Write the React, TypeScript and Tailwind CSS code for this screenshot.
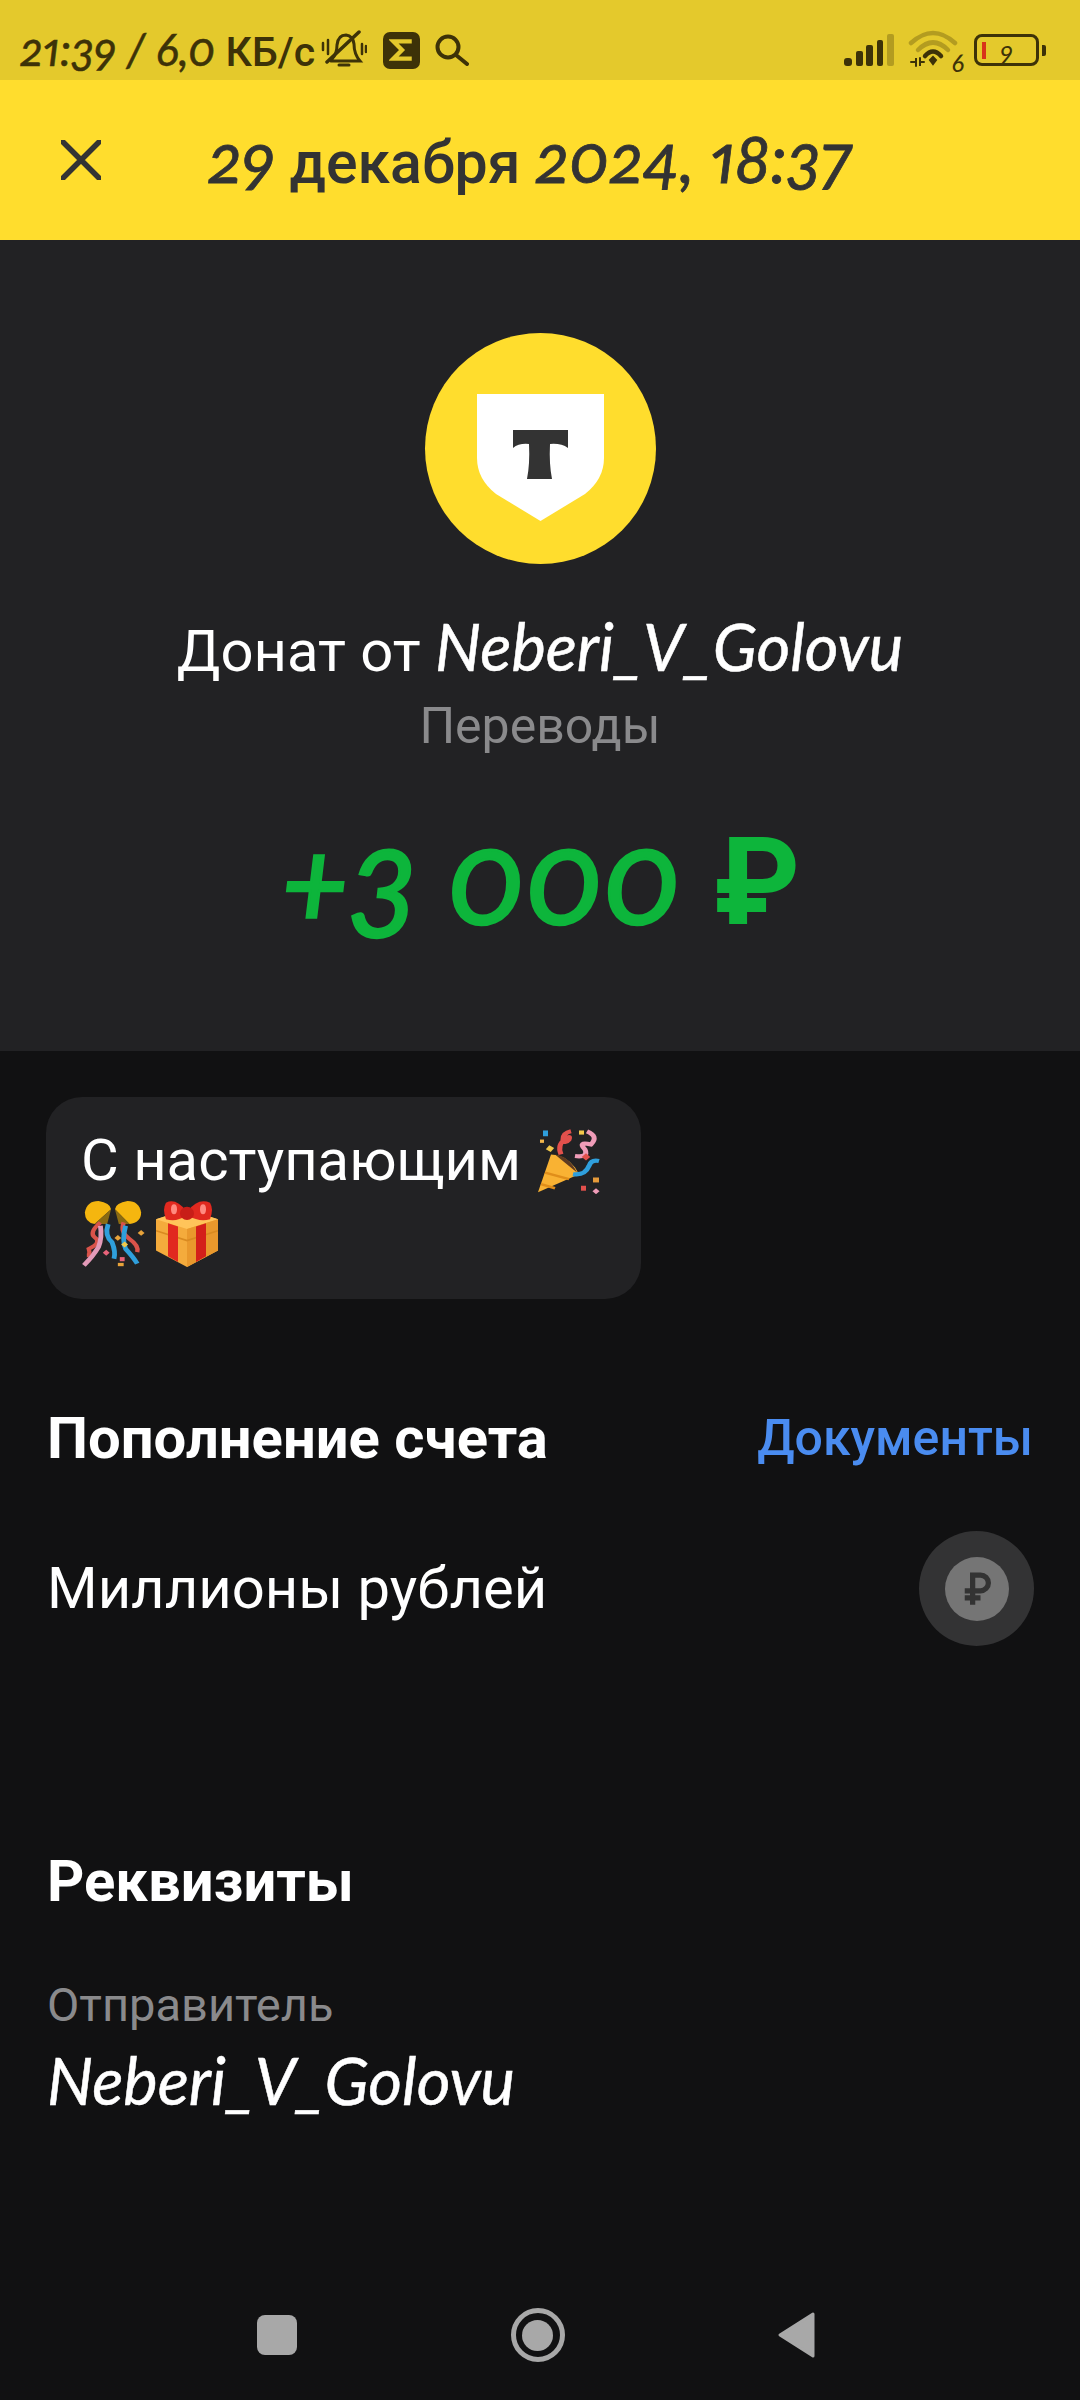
import React from "react";

const roboto = "font-['Roboto','Noto_Sans',sans-serif]";
const latin = "font-['Lato','Open_Sans',sans-serif] italic [font-feature-settings:'onum'_1,'pnum'_1]";

function L({ children, className = "" }: { children: React.ReactNode; className?: string }) {
  return <span className={`${latin} ${className}`}>{children}</span>;
}

function Popper() {
  return (
    <svg viewBox="0 0 66 80" preserveAspectRatio="none" className="inline-block w-[66px] h-[66px] align-[-14px]">
      <path d="M3 78 L16 32 Q30 32 40 48 L44 56 Z" fill="#f9b233" />
      <path d="M10 54 L34 62 M6 68 L20 73" stroke="#e08e1a" strokeWidth="3" />
      <path d="M20 32 Q34 34 42 54 L30 42Z" fill="#5d3a22" />
      <path d="M26 32 Q22 20 30 14 Q36 8 34 14 Q30 20 28 14 Q28 6 36 4" fill="none" stroke="#e2504c" strokeWidth="5" />
      <path d="M40 34 Q54 36 50 26 Q42 16 56 20 Q64 10 52 4" fill="none" stroke="#ef9cb8" strokeWidth="5" />
      <path d="M38 56 Q50 58 54 46 Q56 38 64 40" fill="none" stroke="#2f9fdc" strokeWidth="5" />
      <rect x="8" y="3" width="5" height="7" fill="#2f9fdc" />
      <rect x="5" y="14" width="4" height="4" fill="#f2b64b" />
      <rect x="12" y="22" width="6" height="6" fill="#f2c84b" transform="rotate(35 15 25)" />
      <rect x="48" y="32" width="6" height="6" fill="#e2504c" transform="rotate(45 51 35)" />
      <rect x="58" y="60" width="6" height="6" fill="#e59a3a" />
      <rect x="46" y="70" width="5" height="6" fill="#e2504c" />
      <rect x="59" y="74" width="5" height="5" fill="#ef9cb8" transform="rotate(45 61 76)" />
      <rect x="44" y="3" width="5" height="5" fill="#f2c84b" />
    </svg>
  );
}

function Confetti() {
  return (
    <svg viewBox="0 0 66 80" preserveAspectRatio="none" className="inline-block w-[64px] h-[66px] align-[-14px]">
      <path d="M4 14 Q6 0 18 0 Q30 2 31 10 L14 28 Q4 26 4 14Z" fill="#f5b60f" />
      <path d="M62 14 Q60 0 48 0 Q36 2 35 10 L50 28 Q62 26 62 14Z" fill="#f5b60f" />
      <path d="M14 28 L31 10 L27 28Z M50 28 L35 10 L39 28Z" fill="#8a6a12" />
      <path d="M20 26 Q8 38 14 44 Q22 50 8 58 Q10 66 6 66" fill="none" stroke="#d9534a" strokeWidth="4.5" />
      <path d="M20 30 Q22 44 18 56 Q12 68 3 78" fill="none" stroke="#e39ab8" strokeWidth="5" />
      <path d="M28 28 Q24 42 32 50 Q36 62 34 70" fill="none" stroke="#2f9fdc" strokeWidth="5" />
      <path d="M44 26 Q40 38 50 46 Q60 54 58 62" fill="none" stroke="#d9534a" strokeWidth="4.5" />
      <path d="M46 30 Q42 48 46 58 Q54 68 58 76" fill="none" stroke="#2f9fdc" strokeWidth="5" />
      <rect x="36" y="42" width="5" height="5" fill="#e8a33a" transform="rotate(45 38 44)" />
      <rect x="24" y="60" width="5" height="5" fill="#e8637a" transform="rotate(45 26 62)" />
      <rect x="40" y="68" width="5" height="5" fill="#e8637a" />
      <rect x="38" y="75" width="6" height="4" fill="#e8a33a" />
      <rect x="60" y="36" width="5" height="5" fill="#e8a33a" transform="rotate(45 62 38)" />
      <rect x="43" y="50" width="5" height="5" fill="#f2c84b" transform="rotate(45 45 52)" />
    </svg>
  );
}

function Gift() {
  return (
    <svg viewBox="0 0 62 80" preserveAspectRatio="none" className="inline-block w-[62px] h-[66px] ml-[11px] align-[-14px]">
      <path d="M0 22 L31 10 L62 22 L62 60 L31 80 L0 60Z" fill="#f4ab3c" />
      <path d="M0 22 L31 34 L62 22 L31 10Z" fill="#ffc45a" />
      <path d="M31 34 L62 22 L62 60 L31 80Z" fill="#e9982c" />
      <path d="M0 36 L31 48 L62 36" fill="none" stroke="#d98a20" strokeWidth="2" />
      <path d="M12 27 L22 31 L22 74 L12 67Z" fill="#e1291f" />
      <path d="M40 31 L50 27 L50 67 L40 74Z" fill="#d41f1a" />
      <path d="M30 12 Q20 -4 10 2 Q6 10 10 22 Q20 26 30 18Z" fill="#e1291f" />
      <path d="M32 12 Q42 -4 54 2 Q58 10 54 22 Q44 26 32 18Z" fill="#e1291f" />
      <ellipse cx="31" cy="15" rx="7" ry="8" fill="#c81e18" />
      <ellipse cx="18" cy="10" rx="3" ry="6" fill="#ff8a80" />
      <ellipse cx="47" cy="10" rx="3" ry="6" fill="#ff8a80" />
    </svg>
  );
}

export default function App() {
  return (
    <div className={`w-[1080px] h-[2400px] flex flex-col bg-[#111112] overflow-hidden ${roboto}`}>
      {/* status bar */}
      <div className="h-[80px] shrink-0 bg-[#e4c92c] flex items-end justify-between pb-[8px] pl-[20px] pr-[34px] text-[#3d3208]">
        <div className="flex items-center h-[44px]">
          <span className="text-[41px] font-medium leading-[44px] whitespace-nowrap">
            <L className="text-[46px] font-normal [-webkit-text-stroke:0.5px_#3d3208]">21:39</L>{" "}
            <L className="text-[46px] font-normal [-webkit-text-stroke:0.5px_#3d3208]">/</L>{" "}
            <L className="text-[46px] font-normal [-webkit-text-stroke:0.5px_#3d3208]">6,0</L> КБ/с
          </span>
          <svg viewBox="0 0 46 40" className="w-[46px] h-[40px] ml-[6px]" fill="none" stroke="#3d3208" strokeWidth="3" strokeLinecap="round">
            <path d="M11 29 Q16 24 16 15 Q17 5 25 5 Q32 6 33 14 Q33 24 39 31 L10 31" />
            <path d="M18 35 H28" />
            <path d="M6 32 L38 2" strokeWidth="3.5" />
            <path d="M2 13 V20 M7 10 V24 M41 14 V24 M45 16 V22" strokeWidth="2.5" />
          </svg>
          <div className="ml-[16px] w-[37px] h-[37px] rounded-[7px] bg-[#3d3208] flex items-center justify-center">
            <svg viewBox="0 0 24 24" className="w-[26px] h-[26px]" fill="none" stroke="#e4c92c" strokeWidth="4">
              <path d="M21 4 H4 L12 12 L4 20 H21" />
            </svg>
          </div>
          <svg viewBox="0 0 34 32" className="ml-[15px] w-[34px] h-[32px]" fill="none" stroke="#3d3208" strokeWidth="4" strokeLinecap="round">
            <circle cx="13" cy="13" r="10.5" />
            <path d="M21 21 L32 30" />
          </svg>
        </div>
        <div className="flex items-center h-[44px]">
          <svg viewBox="0 0 50 32" className="w-[50px] h-[32px]">
            <rect x="0" y="24" width="8" height="8" rx="3" fill="#3d3208" />
            <rect x="12" y="17" width="7" height="15" rx="2" fill="#3d3208" />
            <rect x="22" y="11" width="7" height="21" rx="2" fill="#3d3208" />
            <rect x="33" y="6" width="6" height="26" rx="2" fill="#3d3208" />
            <rect x="43" y="0" width="7" height="32" rx="2" fill="#b39c20" />
          </svg>
          <div className="relative ml-[14px] w-[52px] h-[40px]">
            <svg viewBox="0 0 52 40" className="w-[52px] h-[40px]" fill="none" strokeLinecap="round">
              <path d="M3 13 Q25 -7 47 13" stroke="#b39c20" strokeWidth="4.5" />
              <path d="M10 20 Q25 5 40 20" stroke="#b39c20" strokeWidth="4.5" />
              <path d="M17 26 Q25 17 33 26" stroke="#3d3208" strokeWidth="4.5" />
              <path d="M22 30 L25 27 L28 30 L25 34Z" fill="#3d3208" stroke="#3d3208" strokeWidth="2" />
              <path d="M3 32 H8 L8 28 V36 M12 28 V36 L12 32 H16" stroke="#3d3208" strokeWidth="2" />
            </svg>
            <L className="absolute right-[-4px] bottom-[-5px] text-[25px] leading-[26px] font-medium text-[#3d3208]">6</L>
          </div>
          <div className="ml-[14px] flex items-center">
            <div className="relative w-[65px] h-[32px] rounded-[8px] border-[3px] border-[#3d3208] flex items-center justify-center">
              <div className="absolute left-[5px] top-[5px] w-[4px] h-[17px] bg-[#d8341a]" />
              <L className="text-[26px] leading-[26px] text-[#3d3208]">9</L>
            </div>
            <div className="w-[4px] h-[11px] ml-[3px] rounded-r-[2px] bg-[#3d3208]" />
          </div>
        </div>
      </div>

      {/* header */}
      <div className="h-[160px] shrink-0 bg-[#ffdd2d] flex items-center pl-[61px] text-[#333333]">
        <svg viewBox="0 0 40 40" className="w-[40px] h-[40px]" fill="none" stroke="#333" strokeWidth="5.5" strokeLinecap="round">
          <path d="M2 2 L38 38 M38 2 L2 38" />
        </svg>
        <div className="ml-[107px] text-[59px] font-medium leading-[80px] whitespace-nowrap">
          <L className="text-[68px] font-normal [-webkit-text-stroke:0.8px_#333333]">29</L> декабря{" "}
          <L className="text-[68px] font-normal [-webkit-text-stroke:0.8px_#333333]">2024, 18:37</L>
        </div>
      </div>

      {/* hero */}
      <div className="h-[811px] shrink-0 bg-[#222224] flex flex-col items-center pt-[93px]">
        <div className="w-[231px] h-[231px] rounded-full bg-[#ffdd2d] flex items-center justify-center">
          <svg viewBox="0 0 127 127" className="w-[127px] h-[127px] mt-[18px]">
            <path d="M0 0 H127 V64 Q127 85 108 100 L63.5 127 L19 100 Q0 85 0 64Z" fill="#fff" />
            <path d="M36 36 H91 V54 Q84 49 73 50 Q72 70 75 85 H50 Q53 70 52 50 Q42 49 36 54Z" fill="#333" />
          </svg>
        </div>
        <div className="mt-[44px] text-[58px] leading-[76px] text-white whitespace-nowrap">
          Донат от <L className="text-[65px] font-normal [-webkit-text-stroke:0.5px_#ffffff]">Neberi_V_Golovu</L>
        </div>
        <div className="mt-[9px] text-[50px] leading-[56px] text-[#8a8a8c]">Переводы</div>
        <div className="mt-[54px] text-[#0db53b] text-[132px] leading-[130px] whitespace-nowrap">
          <L className="font-normal [-webkit-text-stroke:2.5px_#0db53b]">+3 000</L>{" "}
          <span className="text-[122px] font-bold">₽</span>
        </div>
      </div>

      {/* message */}
      <div className="pt-[46px] pl-[46px]">
        <div className="w-[595px] h-[202px] rounded-[36px] bg-[#222224] pl-[35px] pt-[27px] text-white text-[58px] leading-[73px]">
          С наступающим <Popper />
          <br />
          <Confetti />
          <Gift />
        </div>
      </div>

      {/* operation */}
      <div className="mt-[101px] px-[47px] flex items-center justify-between h-[76px]">
        <div className="text-[58px] font-bold text-white">Пополнение счета</div>
        <div className="text-[50px] font-medium text-[#4a8cf0]">Документы</div>
      </div>
      <div className="mt-[55px] pl-[47px] pr-[46px] flex items-center justify-between">
        <div className="text-[58px] text-white">Миллионы рублей</div>
        <div className="w-[115px] h-[115px] rounded-full bg-[#333334] flex items-center justify-center">
          <div className="w-[64px] h-[64px] rounded-full bg-[#757575] flex items-center justify-center">
            <svg viewBox="0 0 32 40" className="w-[28px] h-[36px]" fill="none" stroke="#333" strokeWidth="6">
              <path d="M11 38 V4 H20 A9 9 0 0 1 20 22 H2 M2 30 H20" />
            </svg>
          </div>
        </div>
      </div>

      {/* details */}
      <div className="mt-[197px] px-[47px] text-[58px] font-bold leading-[76px] text-white">Реквизиты</div>
      <div className="mt-[60px] px-[47px] text-[47px] leading-[52px] text-[#8a8a8c]">Отправитель</div>
      <div className="mt-[11px] px-[47px] text-[65px] leading-[76px] text-white">
        <L className="font-normal [-webkit-text-stroke:0.5px_#ffffff]">Neberi_V_Golovu</L>
      </div>

      {/* nav */}
      <div className="mt-auto h-[130px] flex items-start justify-between pl-[257px] pr-[265px] pt-[27px]">
        <div className="w-[40px] h-[40px] mt-[18px] rounded-[8px] bg-[#a8a8a8]" />
        <div className="w-[54px] h-[54px] mt-[11px] rounded-full border-[5px] border-[#a8a8a8] flex items-center justify-center">
          <div className="w-[31px] h-[31px] rounded-full bg-[#a8a8a8]" />
        </div>
        <svg viewBox="0 0 37 46" className="w-[37px] h-[46px] mt-[15px]">
          <path d="M35 2 V44 L2 23Z" fill="#a8a8a8" stroke="#a8a8a8" strokeWidth="3" strokeLinejoin="round" />
        </svg>
      </div>
    </div>
  );
}
